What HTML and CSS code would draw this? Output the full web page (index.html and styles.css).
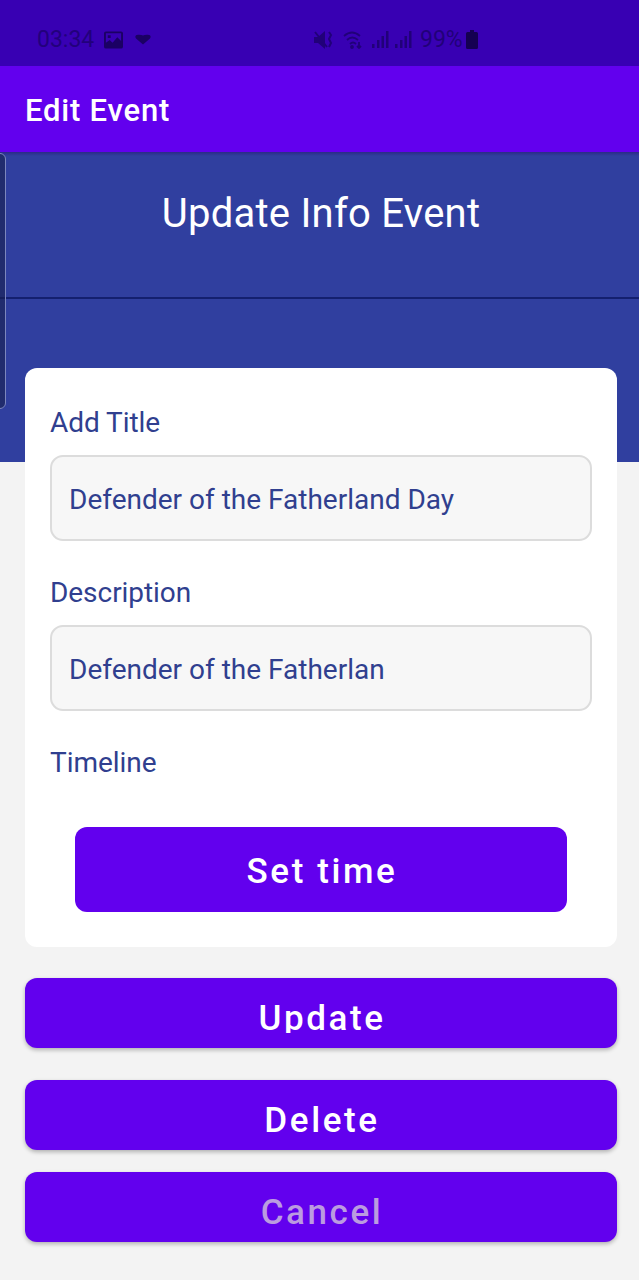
FILE: index.html
```html
<!DOCTYPE html>
<html lang="en">
<head>
<meta charset="utf-8">
<title>Edit Event</title>
<link rel="stylesheet" href="styles.css">
</head>
<body>
<div class="status-bar">
  <div class="status-left">
    <span class="clock">03:34</span>
    <svg class="icon-picture" width="19" height="18" viewBox="0 0 20 18"><path fill="currentColor" fill-rule="evenodd" d="M2 0h16a2 2 0 0 1 2 2v14a2 2 0 0 1-2 2H2a2 2 0 0 1-2-2V2a2 2 0 0 1 2-2ZM2 2v10l4-3 3 3 5-6 4 4V2ZM4 4h3v3H4Z"/></svg>
    <svg class="icon-heart" width="16" height="11" viewBox="0 0 16 11"><path fill="currentColor" d="M8 10.500 1 4.500Q-1 1 3 .8 6 .5 8 1.500 10 .5 13 .8 17 1 15 4.500Z"/></svg>
  </div>
  <div class="status-right">
    <svg width="20" height="18" viewBox="0 0 20 18" fill="none" stroke="currentColor" stroke-width="2"><path fill="currentColor" stroke="none" d="M0 6h4l7-6v18l-7-6H0Z"/><path d="m1 1 12 15M15 1l2 3-2 4 2 4-2 4"/></svg>
    <svg class="icon-wifi" width="20" height="18" viewBox="0 0 20 18" fill="none" stroke="currentColor" stroke-width="1.8"><path d="M1 5q8-7 16 0M4 9q5-5 11 0M7 13q3-3 6 0"/><circle cx="9" cy="16" r="1" fill="currentColor"/><path d="M16 11v6m-2-2 2 2 2-2"/></svg>
    <svg class="icon-signal" width="17" height="17" viewBox="0 0 17 17" fill="currentColor"><path d="M0 13h2.500v4H0zM5 9h2.500v8H5zM9.500 5H12v12H9.500zM14 0h2.500v17H14z"/></svg>
    <svg class="icon-signal-two" width="17" height="17" viewBox="0 0 17 17" fill="currentColor"><path d="M0 13h2.500v4H0zM5 9h2.500v8H5zM9.500 5H12v12H9.500zM14 0h2.500v17H14z"/></svg>
    <span class="battery-level">99%</span>
    <svg class="icon-battery" width="12" height="19" viewBox="0 0 12 19"><path fill="currentColor" d="M4 0h4v2h2.500a1.500 1.500 0 0 1 1.500 1.500v14a1.500 1.500 0 0 1-1.500 1.500h-9A1.500 1.500 0 0 1 0 17.500v-14A1.500 1.500 0 0 1 1.500 2H4Z"/></svg>
  </div>
</div>
<header class="app-bar">Edit Event</header>
<section class="hero">
  <h1 class="hero-title">Update Info Event</h1>
  <div class="edge-handle"></div>
</section>
<main class="content">
  <form class="card">
    <label class="label" for="title">Add Title</label>
    <div class="field" id="title">Defender of the Fatherland Day</div>
    <label class="label" for="description">Description</label>
    <div class="field" id="description">Defender of the Fatherlan</div>
    <div class="label">Timeline</div>
    <button class="button button-time" type="button"><span class="button-text">Set time</span></button>
  </form>
  <button class="button button-update" type="button"><span class="button-text">Update</span></button>
  <button class="button button-delete" type="button"><span class="button-text">Delete</span></button>
  <button class="button button-cancel" type="button"><span class="button-text">Cancel</span></button>
</main>
</body>
</html>
```
FILE: styles.css
```css
* { box-sizing: border-box; }
body {
  margin: 0;
  height: 1280px;
  overflow: hidden;
  background: #f3f3f3;
  font-family: Roboto, "Liberation Sans", sans-serif;
}
.status-bar {
  display: flex;
  height: 66px;
  padding: 14px 0 0 37px;
  background: #3800b3;
  color: #22007c;
  font-size: 23px;
  line-height: 54px;
}
.status-left, .status-right { display: flex; align-items: center; height: 51px; }
.status-left { width: 277px; }
.status-right { color: #210079; }
.icon-picture { margin-left: 10px; color: #1b0064; }
.icon-heart { margin-left: 12px; color: #1b0064; }
.icon-wifi { margin-left: 9px; }
.icon-signal { margin-left: 9px; }
.icon-signal-two { margin-left: 6px; }
.battery-level { margin-left: 8px; }
.icon-battery { margin-left: 3px; color: #150052; }
.app-bar {
  height: 86px;
  padding-left: 25px;
  background: #6200ee;
  color: #fff;
  font-size: 31px;
  font-weight: 500;
  line-height: 89px;
  letter-spacing: 0.8px;
}
.hero {
  position: relative;
  height: 310px;
  background: linear-gradient(#2b2b86, #303f9f 4px);
}
.hero-title {
  height: 147px;
  margin: 0;
  padding-left: 3px;
  border-bottom: 2px solid #14206f;
  color: #fff;
  font-size: 40px;
  font-weight: 400;
  line-height: 124px;
  letter-spacing: 0.25px;
  text-align: center;
}
.edge-handle {
  position: absolute;
  top: 1px;
  left: -11px;
  width: 17px;
  height: 256px;
  border: 1px solid #7c86bd;
  border-radius: 6px;
  background: rgba(24, 31, 78, 0.6);
}
.content {
  position: relative;
  display: flex;
  flex-direction: column;
  margin-top: -94px;
  padding: 0 22px 0 25px;
}
.card {
  display: flex;
  flex-direction: column;
  height: 579px;
  padding: 22px 25px 0;
  border-radius: 12px;
  background: #fff;
}
.label {
  height: 65px;
  color: #303f8f;
  font-size: 28px;
  line-height: 65px;
  letter-spacing: -0.05px;
}
.field {
  height: 86px;
  margin-bottom: 19px;
  padding-left: 17px;
  border: 2px solid #dcdcdc;
  border-radius: 13px;
  background: #f7f7f7;
  color: #303f8f;
  font-size: 28px;
  line-height: 86px;
}
.button {
  flex: none;
  display: flex;
  justify-content: center;
  height: 70px;
  padding: 0;
  border: 0;
  border-radius: 12px;
  background: #6200ee;
  box-shadow: 0 2px 4px rgba(0, 0, 0, 0.28);
  color: #fff;
  font: 500 35px/42px Roboto, "Liberation Sans", sans-serif;
  letter-spacing: 2.6px;
}
.button-text { margin-top: 20px; padding-left: 2px; }
.button-time {
  height: 85px;
  margin: 32px 25px 0;
  box-shadow: none;
}
.button-time .button-text { margin-top: 24px; }
.button-update { margin-top: 31px; }
.button-update .button-text { height: 35px; overflow: hidden; }
.button-delete { margin-top: 32px; }
.button-cancel { margin-top: 22px; color: #bb9be0; }
```
